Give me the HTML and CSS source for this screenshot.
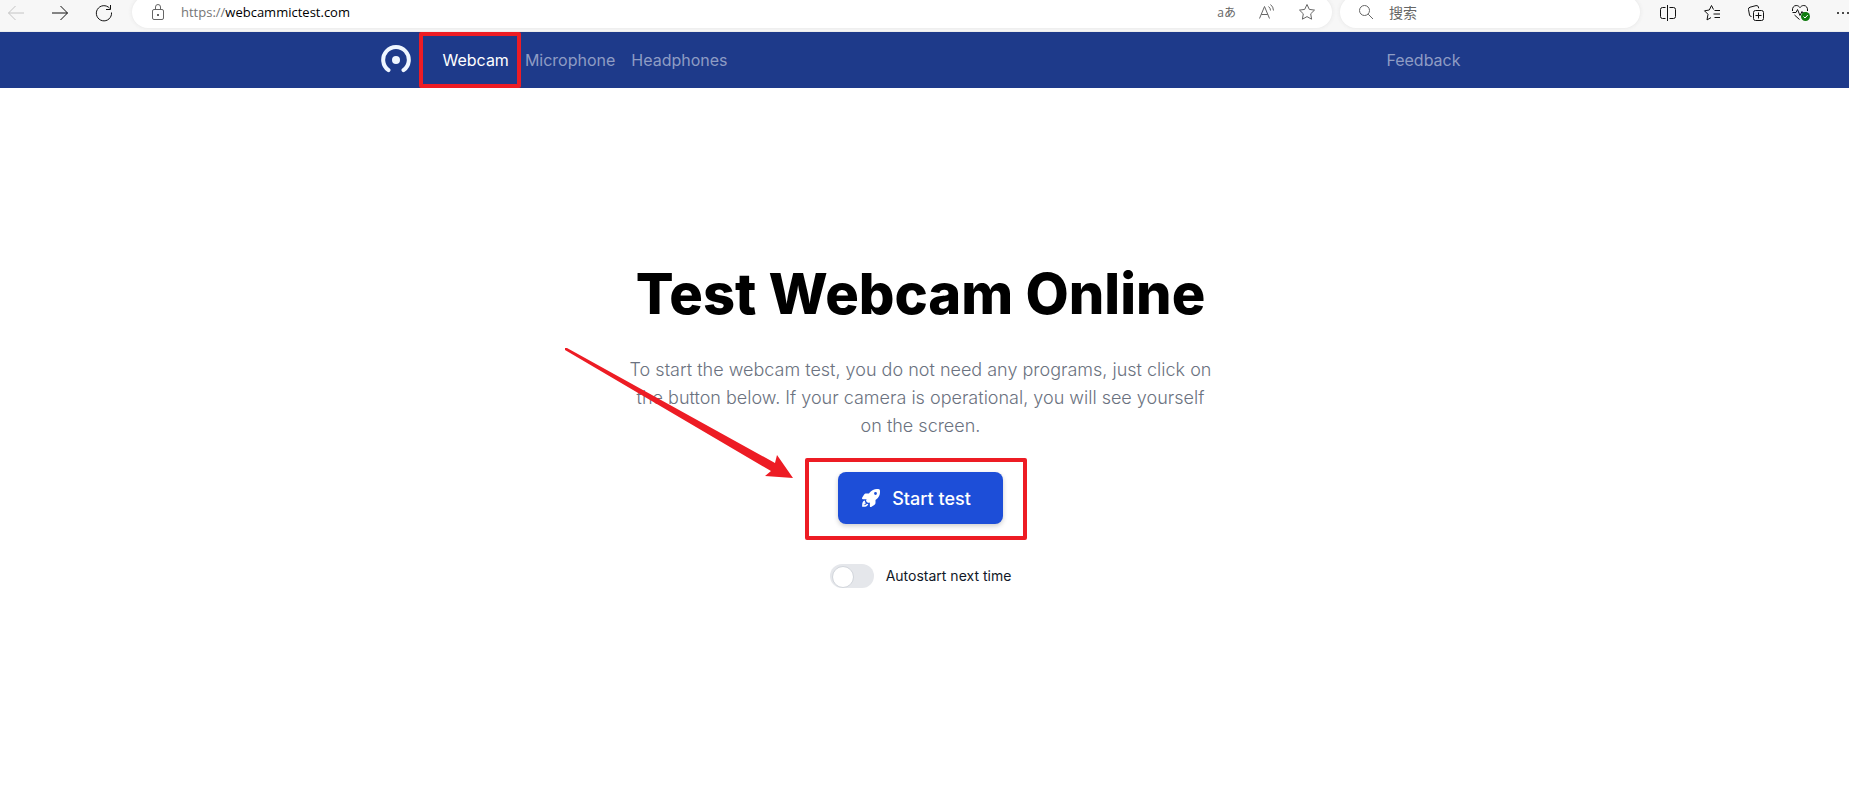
FILE: index.html
```html
<!DOCTYPE html>
<html lang="en">
<head>
    <meta charset="utf-8" />
    <title>Test Webcam Online</title>
    <link rel="stylesheet" href="styles.css">
</head>
<body>
    <div class="toolbar">
        <div class="history">
            <button type="button" class="tool disabled" aria-label="Back">
                <svg width="18" height="18" viewBox="0 0 18 18"><path d="M17 9H1.500M8.500 2L1.500 9l7 7" /></svg>
            </button>
            <button type="button" class="tool" aria-label="Forward">
                <svg width="18" height="18" viewBox="0 0 18 18"><path d="M1 9h15.500M9.500 2l7 7-7 7" /></svg>
            </button>
            <button type="button" class="tool" aria-label="Refresh">
                <svg width="18" height="18" viewBox="0 0 18 18"><path d="M16.500 8.500A7.600 7.600 0 1 1 14.600 4.200M15.500 1v4.500H11" /></svg>
            </button>
        </div>
        <div class="pill address">
            <svg width="16" height="18" viewBox="0 0 16 18"><rect x="2.500" y="6.500" width="11" height="10" rx="1.500" /><path d="M5.500 6.500V4a2.500 2.500 0 0 1 5 0v2.500" /><rect class="dot" x="7" y="11" width="2" height="2" /></svg>
            <a class="url" href="#"><span>https://</span>webcammictest.com</a>
            <span class="translate">aあ</span>
            <svg width="18" height="18" viewBox="0 0 18 18"><path d="M1.500 15.500L6.500 3.500l5 12M3.300 11.500h6.500M10.500 3.500a5 5 0 0 1 2 4M12.500 1.500a8 8 0 0 1 3 6" /></svg>
            <svg width="18" height="18" viewBox="0 0 18 18"><path d="M9 1.500l2.300 4.900 5.200.7-3.800 3.700.9 5.400L9 13.600l-4.600 2.600.9-5.400L1.500 7.100l5.200-.7z" /></svg>
        </div>
        <div class="pill search">
            <svg width="16" height="16" viewBox="0 0 16 16"><circle cx="6.500" cy="6.500" r="5" /><path d="M10.200 10.200l4.800 4.800" /></svg>
            <input type="text" placeholder="搜索" aria-label="搜索" />
        </div>
        <div class="actions">
            <button type="button" class="tool" aria-label="Split screen">
                <svg width="18" height="18" viewBox="0 0 18 18"><path d="M6.500 3.500h-3a2 2 0 0 0-2 2v7a2 2 0 0 0 2 2h3M10.500 3.500h4a2 2 0 0 1 2 2v7a2 2 0 0 1-2 2h-4M8.500 1v16" /></svg>
            </button>
            <button type="button" class="tool" aria-label="Favorites">
                <svg width="18" height="18" viewBox="0 0 18 18"><path d="M10.500 5.500L8.500 1.500 6.300 6 1.500 6.800 5 10.300l-1 5.600 4-2.300M11.500 6.500H17M10.500 10H17M11.500 13.500H17" /></svg>
            </button>
            <button type="button" class="tool" aria-label="Collections">
                <svg width="18" height="18" viewBox="0 0 18 18"><rect x="6.500" y="6.500" width="10" height="10" rx="2" /><path d="M11.500 8.500v6M8.500 11.500h6M4.500 12.500a2 2 0 0 1-2-1.500L1.500 5.500a2 2 0 0 1 1.500-2.300L9 1.600a2 2 0 0 1 2.400 1.400l.3 1.300" /></svg>
            </button>
            <button type="button" class="tool" aria-label="Browser essentials">
                <svg width="20" height="18" viewBox="0 0 20 18"><path d="M1.500 7C1 3.500 3 1.500 5.200 1.500 7.500 1.500 8.500 3 9 3.500c.5-.5 1.500-2 3.800-2 2.200 0 4.200 2 3.700 5.500M1.500 8.500H5l1.500-3 2.500 6 2-4 1 1.500h4M3.500 11l5 4.500" /><circle class="ok" cx="14.500" cy="12.500" r="4.500" /><path class="tick" d="M12.500 12.500l1.500 1.500 2.800-3" /></svg>
            </button>
            <button type="button" class="tool" aria-label="More">
                <svg width="12" height="18" viewBox="0 0 12 18"><circle class="dot" cx="1" cy="9" r="1" /><circle class="dot" cx="6" cy="9" r="1" /><circle class="dot" cx="11" cy="9" r="1" /></svg>
            </button>
        </div>
    </div>

    <div class="page">
        <nav class="navbar">
            <div class="container">
                <a class="logo" href="#" aria-label="Home">
                    <svg width="30" height="30" viewBox="0 0 30 30"><path d="M7.500 25.200a12.800 12.800 0 1 1 15 0" /><circle cx="15" cy="15" r="4" /></svg>
                </a>
                <a class="active" href="#">Webcam</a>
                <a href="#">Microphone</a>
                <a href="#">Headphones</a>
                <a class="feedback" href="#">Feedback</a>
            </div>
        </nav>

        <main>
            <h1>Test Webcam Online</h1>
            <p>To start the webcam test, you do not need any programs, just click on the button below. If your camera is operational, you will see yourself on the screen.</p>
            <div class="start">
                <button id="startButton" type="button">
                    <svg width="18" height="18" viewBox="0 0 512 512"><path d="M157 385l-31-31c-9-9-12-21-8-32 3-9 7-21 12-34H24c-9 0-17-5-21-12s-4-17 0-24l53-89c13-21 36-35 62-35h82c2-4 5-8 7-11C289-4 411-8 484 5c12 2 21 11 23 23 13 73 9 195-112 277-3 2-7 5-11 7v82c0 26-13 49-35 62l-89 53c-7 4-17 4-24 0s-12-12-12-21V381c-14 5-26 9-35 12-12 3-24 0-32-8zM384 168a40 40 0 1 0 0-80 40 40 0 1 0 0 80z" /><path class="flame" d="M84 350c-40 10-60 70-58 136 60 2 118-16 134-58M100 402c-20 0-28 14-30 40" /></svg>
                    Start test
                </button>
                <svg class="arrow" width="228" height="131" viewBox="0 0 228 131"><path d="M0 0L2 0 210 115 212 107 228 130 200 128 206 123 0 2z" /></svg>
            </div>
            <label class="autostart">
                <input type="checkbox" role="switch" />
                Autostart next time
            </label>
        </main>
    </div>
</body>
</html>
```

FILE: styles.css
```css
* {
    box-sizing: border-box;
}

body {
    margin: 0;
    background-color: white;
    font-family: Inter, sans-serif;
}

a {
    text-decoration: none;
}

button {
    border: none;
    padding: 0;
    background: none;
    font-family: inherit;
}

/* browser bar */
.toolbar {
    display: flex;
    height: 32px;
    overflow: hidden;
    background-color: #f7f7f7;
    border-bottom: 1px solid #ececec;
}

.toolbar svg {
    display: block;
    flex: none;
    fill: none;
    stroke: currentColor;
}

.toolbar .dot {
    fill: currentColor;
    stroke: none;
}

.history, .actions {
    display: flex;
    height: 26px;
    align-items: center;
    gap: 26px;
    color: #111;
}

.history {
    width: 132px;
    padding-left: 7px;
    flex: none;
}

.actions {
    padding-left: 19px;
    width: 209px;
    flex: none;
}

.tool {
    color: inherit;
}

.disabled {
    color: #c4c4c4;
}

.toolbar .ok {
    fill: #107c10;
    stroke: none;
}

.tick {
    stroke: white;
}

.pill {
    display: flex;
    align-items: center;
    height: 32px;
    margin-top: -4px;
    padding: 0 16px 0 18px;
    border-radius: 16px;
    background-color: white;
    color: #666;
    box-shadow: 0 0 4px #e4e4e4;
}

.address {
    flex: 1;
    gap: 22px;
    margin-right: 8px;
}

.url {
    flex: 1;
    margin-left: -7px;
    color: black;
    font: 13px "Open Sans", sans-serif;
}

.url span {
    color: #767676;
}

.translate {
    font: 12px "Open Sans", "Noto Sans CJK JP", sans-serif;
}

.search {
    width: 300px;
    gap: 15px;
}

.search input {
    flex: 1;
    min-width: 0;
    border: none;
    padding: 0;
    outline: none;
    font: 14px "Noto Sans CJK SC", sans-serif;
}

.search input::placeholder {
    color: #666;
}

/* site */
.page {
    padding-right: 8px;
    background: linear-gradient(#1e3a8a, #1e3a8a) no-repeat 0 0 / 100% 56px;
}

.container {
    display: flex;
    align-items: center;
    gap: 16px;
    max-width: 1080px;
    height: 56px;
    margin: 0 auto;
}

.container a {
    color: #8e9cc4;
    font-size: 16px;
}

.container .active {
    position: relative;
    color: white;
}

.container .logo {
    margin-right: 16px;
}

.logo svg {
    display: block;
    fill: none;
    stroke: #eff6ff;
    stroke-width: 4;
    stroke-linecap: round;
}

.logo circle {
    fill: #eff6ff;
    stroke: none;
}

.container .feedback {
    margin-left: auto;
}

/* red marks */
.active::after, .start::after {
    content: "";
    position: absolute;
    border: 4px solid #ed1c24;
    border-radius: 2px;
    pointer-events: none;
}

.active::after {
    inset: -18px -12px -18px -24px;
}

.start::after {
    inset: -14px -24px -16px -33px;
}

.arrow {
    position: absolute;
    right: 210px;
    bottom: 45px;
    fill: #ed1c24;
}

main {
    display: flex;
    flex-direction: column;
    align-items: center;
    max-width: 584px;
    margin: 0 auto;
    padding-top: 176px;
}

h1 {
    margin: 0 0 32px;
    font-size: 56px;
    line-height: 60px;
    font-weight: 800;
    white-space: nowrap;
}

p {
    margin: 0 0 32px;
    color: #6b7280;
    font-size: 18px;
    line-height: 28px;
    font-weight: 300;
    text-align: center;
}

.start {
    position: relative;
}

#startButton {
    display: flex;
    align-items: center;
    gap: 12px;
    height: 52px;
    padding: 0 32px 0 24px;
    border-radius: 8px;
    background-color: #1d4ed8;
    color: white;
    font-size: 18px;
    font-weight: 500;
    box-shadow: 0 2px 5px rgba(0, 0, 0, .2);
}

#startButton svg {
    fill: white;
}

#startButton .flame {
    fill: none;
    stroke: white;
    stroke-width: 44;
}

.autostart {
    display: flex;
    align-items: center;
    gap: 12px;
    margin-top: 40px;
    color: #111827;
    font-size: 14px;
    line-height: 20px;
}

.autostart input {
    appearance: none;
    display: flex;
    width: 44px;
    height: 24px;
    margin: 0;
    padding: 2px;
    border-radius: 12px;
    background-color: #e5e7eb;
}

.autostart input::before {
    content: "";
    width: 20px;
    height: 20px;
    border: 1px solid #d1d5db;
    border-radius: 50%;
    background-color: white;
}

.autostart input:checked {
    justify-content: flex-end;
    background-color: #1d4ed8;
}
```
